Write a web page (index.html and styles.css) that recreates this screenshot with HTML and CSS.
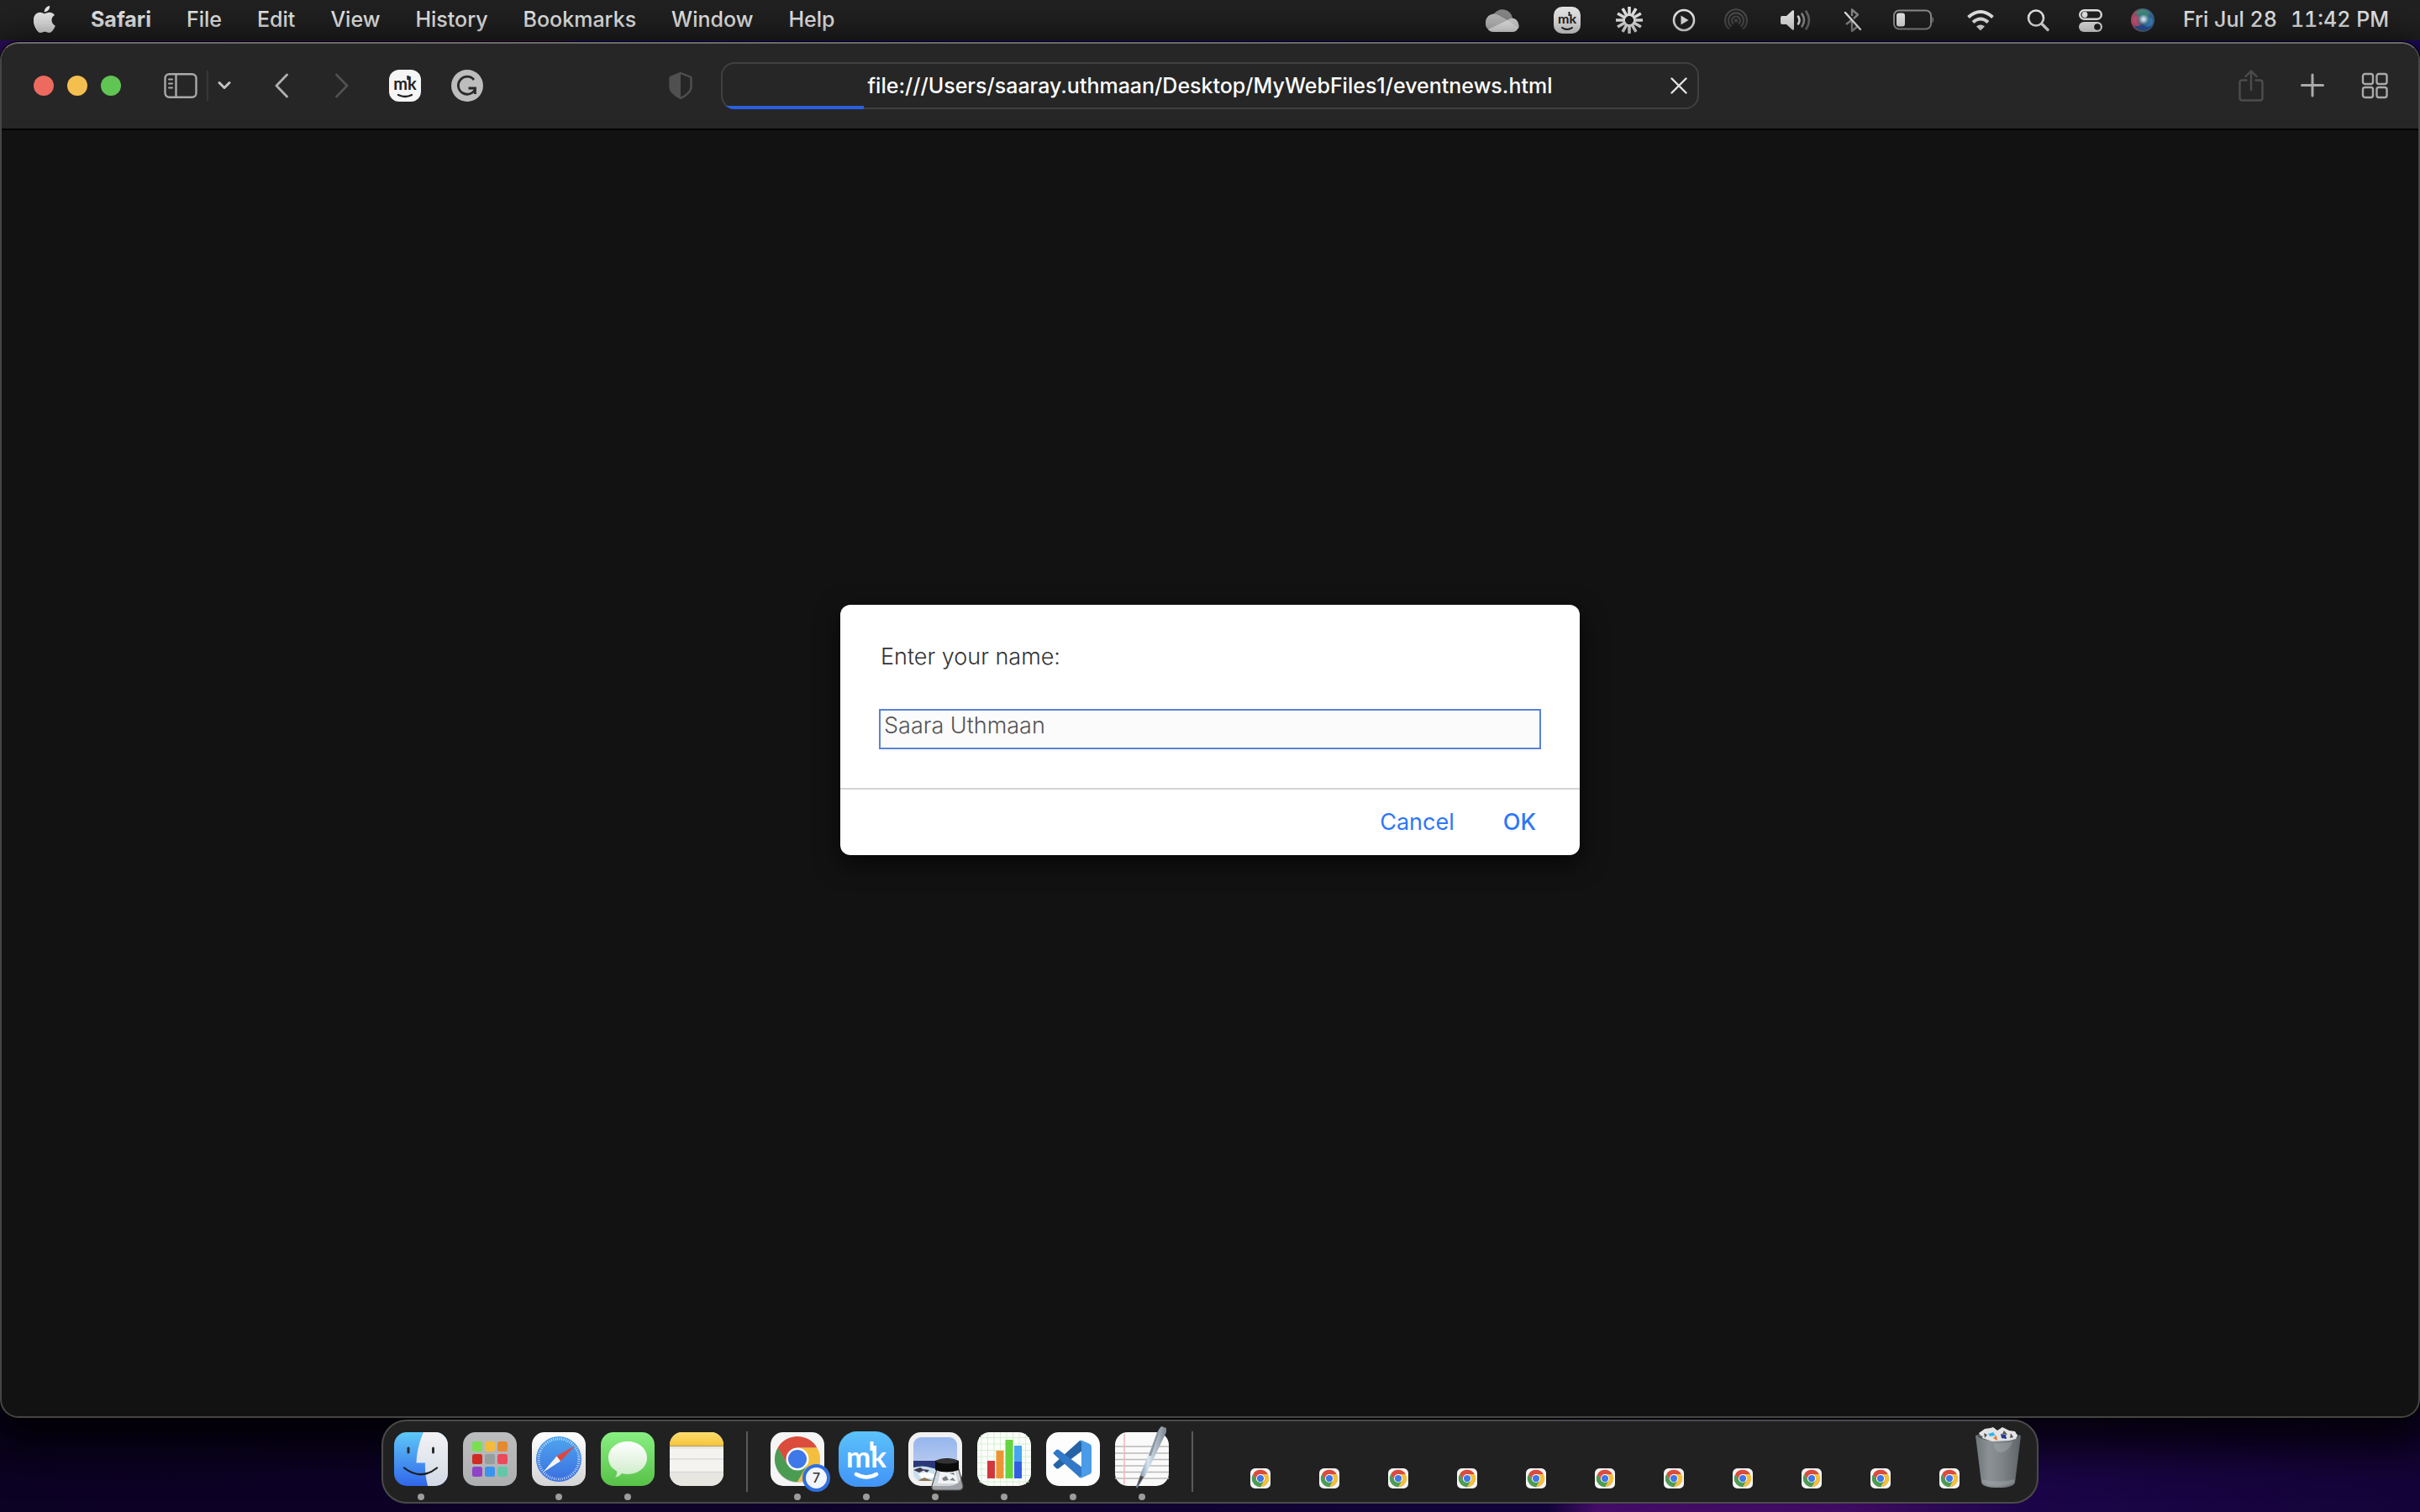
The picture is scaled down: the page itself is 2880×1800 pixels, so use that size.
FILE: index.html
```html
<!DOCTYPE html>
<html lang="en">
<head>
<meta charset="utf-8">
<title>eventnews.html</title>
<link rel="stylesheet" href="styles.css">
</head>
<body class="desktop">

<svg class="defs" aria-hidden="true">
  <defs>
    <linearGradient id="finder-blue" x1="0" y1="0" x2="0" y2="1"><stop offset="0" stop-color="#5ec8f7"/><stop offset="1" stop-color="#3166ea"/></linearGradient>
    <linearGradient id="finder-white" x1="0" y1="0" x2="0" y2="1"><stop offset="0" stop-color="#f2f2f4"/><stop offset="1" stop-color="#d2dae6"/></linearGradient>
    <linearGradient id="green" x1="0" y1="0" x2="0" y2="1"><stop offset="0" stop-color="#88f083"/><stop offset="1" stop-color="#58c147"/></linearGradient>
    <linearGradient id="bubble" x1="0" y1="0" x2="0" y2="1"><stop offset="0" stop-color="#fff"/><stop offset="1" stop-color="#cdebc8"/></linearGradient>
    <linearGradient id="white" x1="0" y1="0" x2="0" y2="1"><stop offset="0" stop-color="#fff"/><stop offset="1" stop-color="#d4d4d4"/></linearGradient>
    <linearGradient id="compass" x1="0" y1="0" x2="0" y2="1"><stop offset="0" stop-color="#4fa5ee"/><stop offset="1" stop-color="#3a6fe0"/></linearGradient>
    <linearGradient id="notes-top" x1="0" y1="0" x2="0" y2="1"><stop offset="0" stop-color="#fbdc6e"/><stop offset="1" stop-color="#f7c53a"/></linearGradient>
    <linearGradient id="keeper" x1="0" y1="0" x2="0" y2="1"><stop offset="0" stop-color="#5bc2fa"/><stop offset="1" stop-color="#4194f8"/></linearGradient>
    <linearGradient id="sky" x1="0" y1="0" x2="0" y2="1"><stop offset="0" stop-color="#8fb2ec"/><stop offset="1" stop-color="#b4c8ef"/></linearGradient>
    <linearGradient id="can" x1="0" y1="0" x2="1" y2="0"><stop offset="0" stop-color="#6f7679"/><stop offset=".3" stop-color="#8b9194"/><stop offset=".6" stop-color="#7d8386"/><stop offset="1" stop-color="#5d6467"/></linearGradient>
    <linearGradient id="pen" x1="0" y1="0" x2="1" y2="0"><stop offset="0" stop-color="#5a6f85"/><stop offset=".4" stop-color="#d5e4ef"/><stop offset="1" stop-color="#7c8792"/></linearGradient>
    <linearGradient id="tray" x1="0" y1="0" x2="0" y2="1"><stop offset="0" stop-color="#bcbdbf"/><stop offset="1" stop-color="#aeafb0"/></linearGradient>
    <radialGradient id="siri"><stop offset="0" stop-color="#fff"/><stop offset=".3" stop-color="#b9d7ee"/><stop offset=".7" stop-color="#3d7f96" stop-opacity=".5"/><stop offset="1" stop-color="#2b4664" stop-opacity="0"/></radialGradient>
    <linearGradient id="siri-base" x1="0" y1="0" x2="1" y2="0"><stop offset="0" stop-color="#cf4668"/><stop offset=".4" stop-color="#4f6a76"/><stop offset="1" stop-color="#35679f"/></linearGradient>
    <clipPath id="tile"><rect width="64" height="64" rx="15"/></clipPath>
    <clipPath id="photo"><rect x="6" y="6" width="52" height="52" rx="9"/></clipPath>
    <symbol id="chrome" viewBox="0 0 64 64">
      <rect width="64" height="64" rx="15" fill="#f5f5f5"/>
      <circle cx="32" cy="33" r="27" fill="#0003"/>
      <path fill="#db4c3c" d="M8.6 18.5A27 27 0 0 1 55.4 18.5H32L20.3 38.8Z"/>
      <path fill="#f4bf3d" d="M55.4 18.5A27 27 0 0 1 32 59L43.7 38.8 32 18.5Z"/>
      <path fill="#4b9c52" d="M32 59A27 27 0 0 1 8.6 18.5L20.3 38.8H43.7Z"/>
      <circle cx="32" cy="32" r="13.5" fill="#fff"/><circle cx="32" cy="32" r="11" fill="#3f78e8"/>
    </symbol>
  </defs>
</svg>

<header class="menubar">
  <nav class="menus" aria-label="Menu bar">
    <button class="menu" aria-label="Apple"><svg width="26" height="32" viewBox="2.4 0 19.5 24" fill="#e9e9e9"><path d="M12.152 6.896c-.948 0-2.415-1.078-3.96-1.04-2.04.027-3.91 1.183-4.961 3.014-2.117 3.675-.546 9.103 1.519 12.09 1.013 1.454 2.208 3.09 3.792 3.039 1.52-.065 2.09-.987 3.935-.987 1.831 0 2.35.987 3.96.948 1.637-.026 2.676-1.48 3.676-2.948 1.156-1.688 1.636-3.325 1.662-3.415-.039-.013-3.182-1.221-3.22-4.857-.026-3.04 2.48-4.494 2.597-4.559-1.429-2.09-3.623-2.324-4.39-2.376-2-.156-3.675 1.09-4.61 1.09zM15.53 3.83c.843-1.012 1.4-2.427 1.245-3.83-1.207.052-2.662.805-3.532 1.818-.78.896-1.454 2.338-1.273 3.714 1.338.104 2.715-.688 3.559-1.701"/></svg></button>
    <button class="menu menu-app">Safari</button>
    <button class="menu">File</button>
    <button class="menu">Edit</button>
    <button class="menu">View</button>
    <button class="menu">History</button>
    <button class="menu">Bookmarks</button>
    <button class="menu">Window</button>
    <button class="menu">Help</button>
  </nav>
  <div class="status">
    <svg width="40" height="30" viewBox="0 0 40 30"><path fill="#8b8b8b" d="M9 9a12 11 0 0 1 23 4L20 20Z"/><path fill="#bdbdbd" d="M9 7.500Q13 7 17 10L28 16 4 27A11 11 0 0 1 9 7.500Z"/><path fill="#d6d6d6" d="M26 15Q32 10 37 15 41 20 39 25L24 17Z"/><path fill="#ebebeb" d="M3 26 26 15 39 24Q37 29 32 29H9Q5 29 3 26Z"/></svg>
    <svg width="46" height="32" viewBox="0 0 46 32"><rect x="7" width="32" height="32" rx="10" fill="#e9e9e9"/><text class="mark" x="23" y="20" font-size="16" fill="#212121" text-anchor="middle">mk</text><path d="M25.500 6v5" stroke="#212121" stroke-width="2"/><path d="M17 25q6 4 12 0" fill="none" stroke="#212121" stroke-width="2" stroke-linecap="round"/></svg>
    <svg width="34" height="34" viewBox="-17 -17 34 34"><g stroke="#e9e9e9" stroke-width="3.600"><path d="M0-16V-5M0 5V16M-16 0H-5M5 0H16M-8-13.900-2.500-4.300M2.500 4.300 8 13.900M-13.900-8-4.300-2.500M4.300 2.500 13.900 8M8-13.900 2.500-4.300M-2.500 4.300-8 13.900M13.900-8 4.300-2.500M-4.300 2.500-13.900 8"/></g><circle r="6.500" fill="none" stroke="#e9e9e9" stroke-width="2.500"/></svg>
    <svg width="28" height="28" viewBox="0 0 28 28"><circle cx="14" cy="14" r="12" fill="none" stroke="#e9e9e9" stroke-width="2.600"/><path d="M10.500 8.500v11l9-5.500z" fill="#e9e9e9"/></svg>
    <svg width="28" height="28" viewBox="0 0 28 28" fill="none" stroke="#4a4a4a" stroke-width="2.200"><path d="M6 24.500A13 13 0 1 1 22 24.500M8.500 21.500A9 9 0 1 1 19.500 21.500M11 18.500A5 5 0 1 1 17 18.500"/><circle cx="14" cy="14.500" r="2.200" fill="#4a4a4a" stroke="none"/></svg>
    <svg width="46" height="28" viewBox="0 0 46 28" fill="none" stroke-width="2.600" stroke-linecap="round"><path fill="#e9e9e9" d="M7 9h5l7-6.500q2-1 2 1v21q0 2-2 1L12 19H7q-2 0-2-2v-6q0-2 2-2Z"/><path stroke="#e9e9e9" d="M26 9.500q3 4.500 0 9"/><path stroke="#8a8a8a" d="M30.500 6.500q5 7.500 0 15"/><path stroke="#6a6a6a" d="M35.500 3.500q7 10.500 0 21"/></svg>
    <svg width="22" height="30" viewBox="0 0 22 30" fill="none" stroke-width="2.400" stroke-linejoin="round"><path stroke="#8a8a8a" d="M10 10V2.500l7 6-5 4.500M3 20l7-5.500V28l6.500-5.500"/><path stroke="#e9e9e9" stroke-linecap="round" d="M2 6l18 20"/></svg>
    <svg width="52" height="28" viewBox="0 0 52 28"><rect x="4" y="2.500" width="44" height="22" rx="6" fill="none" stroke="#8e8e8e" stroke-width="2"/><rect x="7" y="5.500" width="10" height="16" rx="3" fill="#e9e9e9"/><path d="M49.500 9.500q3 4 0 8z" fill="#8e8e8e"/></svg>
    <svg width="42" height="28" viewBox="0 0 42 28" fill="none" stroke="#e9e9e9" stroke-width="4"><path d="M6.500 10.500q14.500-13 29 0M12 16.500q9-8 18 0"/><path fill="#e9e9e9" stroke="none" d="M16 21.500q5-4 10 0l-5 5z"/></svg>
    <svg width="28" height="28" viewBox="0 0 28 28" fill="none" stroke="#e9e9e9" stroke-linecap="round"><circle cx="11" cy="11.500" r="9" stroke-width="2.600"/><path stroke-width="3.400" d="m18 18.500 7 7"/></svg>
    <svg width="28" height="28" viewBox="0 0 28 28"><rect x="1.200" y="2.200" width="25.600" height="10.600" rx="5.300" fill="none" stroke="#e9e9e9" stroke-width="2.400"/><circle cx="7" cy="7.500" r="3.400" fill="#e9e9e9"/><rect y="16" width="28" height="12" rx="6" fill="#e9e9e9"/><circle cx="22" cy="22" r="3.800" fill="#212121"/></svg>
    <svg width="28" height="28" viewBox="0 0 28 28"><circle cx="14" cy="14" r="14" fill="url(#siri-base)"/><path d="M6 5q8-7 16 0l-2 8-10-1z" fill="#3e9a78" opacity=".8"/><path d="M4 22q10 8 20 0l-8-4z" fill="#2d56a5"/><circle cx="8" cy="15" r="6" fill="#e0577c" opacity=".7"/><circle cx="20" cy="16" r="6" fill="#3f9fe0" opacity=".6"/><circle cx="15" cy="13" r="9" fill="url(#siri)"/></svg>
    <time class="clock"><span>Fri Jul 28</span><span>11:42 PM</span></time>
  </div>
</header>

<main class="window">
  <div class="toolbar">
    <div class="tools-left">
      <div class="lights">
        <button class="light light-close" aria-label="Close"></button>
        <button class="light light-min" aria-label="Minimize"></button>
        <button class="light light-max" aria-label="Zoom"></button>
      </div>
      <div class="sidebar-tools">
        <button class="tool" aria-label="Sidebar"><svg width="40" height="32" viewBox="0 0 40 32" fill="none" stroke="#a9a9a9" stroke-width="2.400"><rect x="1.500" y="2.200" width="37" height="27.600" rx="5"/><path d="M14.500 2v28"/><path stroke-linecap="round" stroke-width="2" d="M6 8.500h4M6 13.500h4M6 18.500h4"/></svg></button>
        <span class="divider"></span>
        <button class="tool" aria-label="Tab groups"><svg width="16" height="12" viewBox="0 0 16 12" fill="none" stroke="#c4c4c4" stroke-width="3" stroke-linecap="round" stroke-linejoin="round"><path d="m2 2.500 6 6 6-6"/></svg></button>
      </div>
      <div class="history-tools">
        <button class="tool" aria-label="Back"><svg width="16" height="30" viewBox="0 0 16 30" fill="none" stroke="#b0b0b0" stroke-width="2.800" stroke-linecap="round" stroke-linejoin="round"><path d="M14.500 2 2 15l12.500 13"/></svg></button>
        <button class="tool" aria-label="Forward"><svg width="16" height="30" viewBox="0 0 16 30" fill="none" stroke="#505050" stroke-width="2.800" stroke-linecap="round" stroke-linejoin="round"><path d="M1.500 2 14 15 1.500 28"/></svg></button>
      </div>
      <div class="extension-tools">
        <button class="tool" aria-label="MacKeeper"><svg width="38" height="38" viewBox="0 0 38 38"><rect width="38" height="38" rx="12" fill="#f5f5f5"/><text class="mark" x="19" y="24" font-size="20" fill="#222" text-anchor="middle">mk</text><path d="M22.500 7v5" stroke="#222" stroke-width="2.400"/><path d="M11 30q8 4 16 0" fill="none" stroke="#222" stroke-width="2.400" stroke-linecap="round"/></svg></button>
        <button class="tool" aria-label="Grammarly"><svg width="38" height="38" viewBox="0 0 38 38" fill="none" stroke="#2a2a2a" stroke-width="2.800"><circle cx="19" cy="19" r="19" fill="#bdbdbd" stroke="none"/><path d="M27 12A10.500 10.500 0 1 0 28.500 23"/><path d="M20.500 22H28.500V29"/></svg></button>
      </div>
      <button class="tool shield" aria-label="Privacy report"><svg width="28" height="34" viewBox="0 0 28 34"><path d="M14 2 25.500 6.500Q26.500 7 26.500 8V19Q26 26 14 32 2 26 1.500 19V8Q1.500 7 2.500 6.500Z" fill="none" stroke="#505050" stroke-width="2.400"/><path d="M14 2 2 6.500V19q1 8 12 13z" fill="#505050"/></svg></button>
    </div>
    <form class="address">
      <input class="address-input" type="text" aria-label="Address" value="file:///Users/saaray.uthmaan/Desktop/MyWebFiles1/eventnews.html">
      <button class="tool" type="button" aria-label="Stop loading"><svg width="20" height="20" viewBox="0 0 20 20" stroke="#e4e4e4" stroke-width="2.400" stroke-linecap="round"><path d="m1.500 1.500 17 17m0-17-17 17"/></svg></button>
      <span class="progress"></span>
    </form>
    <div class="tools-right">
      <button class="tool" aria-label="Share"><svg width="30" height="38" viewBox="0 0 30 38" fill="none" stroke="#4c4c4c" stroke-width="2.400" stroke-linecap="round" stroke-linejoin="round"><path d="M9.500 12.500H4.500Q1.500 12.500 1.500 15.500V33.500Q1.500 36.500 4.500 36.500H25.500Q28.500 36.500 28.500 33.500V15.500Q28.500 12.500 25.500 12.500H20.500M15 24V2M8.500 8 15 1.500 21.500 8"/></svg></button>
      <button class="tool" aria-label="New tab"><svg width="28" height="30" viewBox="0 0 28 30" stroke="#aaa" stroke-width="3" stroke-linecap="round"><path d="M14 2v25M1.500 14.500h25"/></svg></button>
      <button class="tool" aria-label="Tab overview"><svg width="32" height="32" viewBox="0 0 32 32" fill="none" stroke="#aaa" stroke-width="2.400"><rect x="2" y="2" width="12" height="12" rx="2.500"/><rect x="18.500" y="2" width="12" height="12" rx="2.500"/><rect x="2" y="18" width="12" height="12" rx="2.500"/><rect x="18.500" y="18" width="12" height="12" rx="2.500"/></svg></button>
    </div>
  </div>

  <div class="page">
    <form class="prompt" role="dialog" aria-labelledby="prompt-label">
      <div class="prompt-body">
        <label class="prompt-label" id="prompt-label" for="name">Enter your name:</label>
        <input class="prompt-input" id="name" type="text" value="Saara Uthmaan">
      </div>
      <div class="prompt-actions">
        <button class="prompt-button" type="button">Cancel</button>
        <button class="prompt-button prompt-ok" type="button">OK</button>
      </div>
    </form>
  </div>
</main>

<nav class="dock" aria-label="Dock">
  <a class="app running" href="#" aria-label="Finder"><svg width="64" height="64" viewBox="0 0 64 64"><g clip-path="url(#tile)"><rect width="64" height="64" fill="url(#finder-blue)"/><path fill="url(#finder-white)" d="M35 0C30 11 27 24 26.500 36.500H37C36.500 46 38 56 40 64H64V0Z"/></g><path d="M12 42.500Q32 58 51 42.500" fill="none" stroke="#1d1d1f" stroke-width="2.200" stroke-linecap="round"/><path d="M17 19v5M46.500 19v5" stroke="#2b2b2d" stroke-width="3" stroke-linecap="round"/></svg></a>
  <a class="app" href="#" aria-label="Launchpad"><svg width="64" height="64" viewBox="0 0 64 64"><rect width="64" height="64" rx="15" fill="url(#tray)"/><rect x="11" y="11" width="12" height="12" rx="2.500" fill="#79e04f"/><rect x="26" y="11" width="12" height="12" rx="2.500" fill="#f3bd3a"/><rect x="41" y="11" width="12" height="12" rx="2.500" fill="#e58a2f"/><rect x="11" y="26" width="12" height="12" rx="2.500" fill="#cf2b22"/><rect x="26" y="26" width="12" height="12" rx="2.500" fill="#979ea0"/><rect x="41" y="26" width="12" height="12" rx="2.500" fill="#ea4a5c"/><rect x="11" y="41" width="12" height="12" rx="2.500" fill="#8e44c8"/><rect x="26" y="41" width="12" height="12" rx="2.500" fill="#3a94ee"/><rect x="41" y="41" width="12" height="12" rx="2.500" fill="#62c7a6"/></svg></a>
  <a class="app running" href="#" aria-label="Safari"><svg width="64" height="64" viewBox="0 0 64 64"><rect width="64" height="64" rx="15" fill="url(#white)"/><circle cx="32" cy="32" r="27" fill="url(#compass)"/><circle cx="32" cy="32" r="24" fill="none" stroke="#dfeafc" stroke-width="3" stroke-dasharray="0.800 1.713"/><path fill="#e2453a" d="m51.500 16-22 12.500 4.500 6z"/><path fill="#f4f4f4" d="M13 48 29.500 28.500 34 34.500Z"/></svg></a>
  <a class="app running" href="#" aria-label="Messages"><svg width="64" height="64" viewBox="0 0 64 64"><rect width="64" height="64" rx="15" fill="url(#green)"/><path fill="url(#bubble)" d="M32 11C45 11 55 19.500 55 30.500S45 50 32 50Q28 50 25 49 22 53 17 53.500 20 50 19 46.500 9 41 9 30.500C9 19.500 19 11 32 11Z"/></svg></a>
  <a class="app" href="#" aria-label="Notes"><svg width="64" height="64" viewBox="0 0 64 64"><g clip-path="url(#tile)"><rect width="64" height="64" fill="#f4f3f0"/><rect y="48" width="64" height="16" fill="#e8e6e0"/><rect width="64" height="16" fill="url(#notes-top)"/><path stroke="#b7a66f" stroke-width="1.500" d="M0 16.500h64"/><path stroke="#c4c4c4" stroke-dasharray="1 1.500" d="M0 19h64"/><path stroke="#d9d9dc" stroke-width="1.500" d="M0 32h64M0 47.500h64"/></g></svg></a>
  <span class="dock-divider"></span>
  <a class="app running" href="#" aria-label="Google Chrome"><svg width="64" height="64"><use href="#chrome"/></svg><span class="badge">7</span></a>
  <a class="app running" href="#" aria-label="MacKeeper"><svg width="66" height="66" viewBox="0 0 66 66"><rect width="66" height="66" rx="22" fill="url(#keeper)"/><text class="mark" x="33" y="43" font-size="35" fill="#fff" text-anchor="middle">mk</text><path d="M39.500 12v11" stroke="#fff" stroke-width="4"/><path d="M21 51q12 7 24 0" fill="none" stroke="#fff" stroke-width="4.500" stroke-linecap="round"/></svg></a>
  <a class="app running" href="#" aria-label="Preview"><svg class="spill" width="64" height="64" viewBox="0 0 64 64"><rect width="64" height="64" rx="15" fill="#f1f1f1"/><g clip-path="url(#photo)"><rect width="64" height="36" fill="url(#sky)"/><rect y="34" width="64" height="12" fill="#2b3878"/><path fill="#c9dfee" d="M6 42q12-3 20 0t34 2v16H6Z"/><path fill="#fff" d="M12 50q10-5 18 0t16 4l-30 1z"/><path fill="#40384c" d="m6 45 8-3 5 3-6 3zm10-1 9 1-3 3z"/><path fill="#8b7553" d="m10 58 9-4 10 4z"/></g><path fill="#c9cfd4" fill-opacity=".75" stroke="#555" stroke-width="1.200" d="M34 44H60L65 64Q65 69 60 69H32Q27 69 28 64Z"/><path fill="#f1f3f5" d="M38 46h18l3 15H35Z"/><path fill="#777c80" d="m40 55 5-3 3 5-6 1zm9-6 5-1 1 3zm0 8 4-3 3 4z"/><path fill="#0c0c0c" d="M32 34Q46 28 60 34V45Q46 50 32 45Z"/><ellipse cx="46" cy="34.500" rx="13" ry="3" fill="#333"/></svg></a>
  <a class="app running" href="#" aria-label="Numbers"><svg width="64" height="64" viewBox="0 0 64 64"><rect width="64" height="64" rx="15" fill="#fcfdfb"/><path stroke="#d4f1cf" d="M5 3v58M12.500 0v64M20 0v64M27.500 0v64M35 0v64M42.500 0v64M50 0v64M57.500 2v60M2 6.500h60M0 14h64M0 21.500h64M0 29h64M0 36.500h64M0 44h64M0 51.500h64M2 59h60"/><rect x="12" y="34" width="9" height="21" fill="#d2373c"/><rect x="22.500" y="22" width="9" height="33" fill="#ec9433"/><rect x="33.500" y="9" width="9" height="46" fill="#63d63f"/><rect x="44" y="16" width="9" height="20" fill="#47a5f2"/><rect x="44" y="35" width="9" height="20" fill="#3160e2"/></svg></a>
  <a class="app running" href="#" aria-label="Visual Studio Code"><svg width="64" height="64" viewBox="0 0 64 64"><rect width="64" height="64" rx="15" fill="#fdfdfd"/><path fill="#2563a6" d="M9 38q-1 1 0 2l3 3q1 1 3 0L43 22V10q-2-1-4 1Z"/><path fill="#3178c9" d="M9 26q-1-1 0-2l3-3q1-1 3 0L43 42V54q-2 1-4-1Z"/><path fill="#4a9be8" d="M43 10 52 14Q54 15 54 17.500V46.500Q54 49 52 50L43 54Q40 55 38.500 53 42 54 42 51V13Q42 10 38.500 11 40 9 43 10Z"/></svg></a>
  <a class="app running" href="#" aria-label="TextEdit"><svg class="spill" width="64" height="64" viewBox="0 0 64 64"><rect width="64" height="64" rx="15" fill="#fafafa"/><path stroke="#b9b9b9" stroke-width="1.500" d="M0 17h64M0 25h64M0 32.500h64M0 40h64M0 47.500h64M0 55h64"/><path stroke="#f3b6b9" stroke-width="1.500" d="M11 2v60"/><path fill="url(#pen)" d="m52-3 3-4 6 2v5L36 52 26 67 25 65 31 48Z"/><path fill="#8b97a2" d="m50 0 3-2-10 30h-3z"/><path fill="#54413c" d="m30 52 4 1-7 11z"/></svg></a>
  <span class="dock-divider"></span>
  <a class="thumb" href="#" aria-label="Chrome window 1"><svg width="24" height="24"><use href="#chrome"/></svg></a>
  <a class="thumb" href="#" aria-label="Chrome window 2"><svg width="24" height="24"><use href="#chrome"/></svg></a>
  <a class="thumb" href="#" aria-label="Chrome window 3"><svg width="24" height="24"><use href="#chrome"/></svg></a>
  <a class="thumb" href="#" aria-label="Chrome window 4"><svg width="24" height="24"><use href="#chrome"/></svg></a>
  <a class="thumb" href="#" aria-label="Chrome window 5"><svg width="24" height="24"><use href="#chrome"/></svg></a>
  <a class="thumb" href="#" aria-label="Chrome window 6"><svg width="24" height="24"><use href="#chrome"/></svg></a>
  <a class="thumb" href="#" aria-label="Chrome window 7"><svg width="24" height="24"><use href="#chrome"/></svg></a>
  <a class="thumb" href="#" aria-label="Chrome window 8"><svg width="24" height="24"><use href="#chrome"/></svg></a>
  <a class="thumb" href="#" aria-label="Chrome window 9"><svg width="24" height="24"><use href="#chrome"/></svg></a>
  <a class="thumb" href="#" aria-label="Chrome window 10"><svg width="24" height="24"><use href="#chrome"/></svg></a>
  <a class="thumb" href="#" aria-label="Chrome window 11"><svg width="24" height="24"><use href="#chrome"/></svg></a>
  <a class="app trash" href="#" aria-label="Trash"><svg class="spill" width="64" height="64" viewBox="0 0 64 64"><path fill="url(#can)" d="M3 4Q30-4 57 4L50 60Q48 66 30 66T10 60Z"/><path fill="#4d5356" d="M5 4q25-7 50 0-3 6-25 6T5 4Z"/><path fill="#e4e4e4" d="m7 1 7-5 7-1 3-1 5 4 6-4 8 4 7 1 3 5-2 4-8 2-20 1-12-4z"/><path fill="#555" d="m13 1 4 2-3 4zm24-3 4 5-6-1zm8 3 3 5-4 1zM9 4l3 1-2 2z"/><path fill="#38b5e6" d="m18 2 6-2 3 4-7 1z"/><path fill="#e07a2c" d="m24 7 4-3 1 6z"/><path fill="#273a8f" d="m33 2 6 1 1 5-6-1z"/><path fill="#b0b6b8" opacity=".35" d="M25 13q15 0 22-2-4 13-15 13-8-2-7-11Z"/><path fill="#a7adb0" opacity=".4" d="M10 56q20 5 40 0l-2 5q-18 6-36 0z"/></svg></a>
</nav>

</body>
</html>
```
FILE: styles.css
```css
* {
  box-sizing: border-box;
}

.desktop {
  margin: 0;
  min-height: 100vh;
  display: flex;
  flex-direction: column;
  font-family: Inter, "Liberation Sans", sans-serif;
  font-size: 25px;
  font-weight: 500;
  color: #e9e9e9;
  background:
    linear-gradient(90deg, #32106a 0, #4a1450 23%, #1d109c 24%, #260b86 60%, #1f0a66 100%) top / 100% 80px no-repeat,
    linear-gradient(90deg, #0c0224 0, #0e0228 30%, #12043a 64%, #430c66 66%, #3f0b62 76%, #1b0548 84%, #140338 100%);
}

button,
input {
  font: inherit;
  color: inherit;
  margin: 0;
  padding: 0;
  border: 0;
  background: none;
}

svg {
  display: block;
  flex: none;
}

.defs {
  position: absolute;
  width: 0;
  height: 0;
}

.mark {
  font-family: Lato, sans-serif;
  font-weight: 700;
}

/* Menu bar */

.menubar {
  display: flex;
  justify-content: space-between;
  align-items: center;
  height: 48px;
  padding: 0 37px 0 40px;
  background: #212121;
}

.menus {
  display: flex;
  align-items: center;
  gap: 42px;
}

.menu {
  line-height: 32px;
  padding-bottom: 2px;
}

.menu-app {
  font-weight: 700;
}

.status {
  display: flex;
  align-items: center;
  gap: 34px;
}

.clock {
  display: flex;
  gap: 16px;
  line-height: 32px;
  padding-bottom: 2px;
  font-variant-numeric: tabular-nums;
}

/* Browser window */

.window {
  flex: 1;
  display: flex;
  flex-direction: column;
  margin-top: 2px;
  border: 2px solid #454545;
  border-top-color: #6b6b6b;
  border-radius: 22px;
  overflow: hidden;
  box-shadow: 0 0 0 1px #000, 0 20px 50px 20px #000c;
  background: #121212;
}

.toolbar {
  display: grid;
  grid-template-columns: 1fr minmax(0, 1164px) 1fr;
  align-items: center;
  height: 103px;
  padding-bottom: 2px;
  border-bottom: 2px solid #000;
  background: #262626;
}

.tools-left {
  display: flex;
  align-items: center;
  padding: 0 34px 0 38px;
}

.lights {
  display: flex;
  gap: 16px;
}

.light {
  width: 24px;
  height: 24px;
  border-radius: 50%;
}

.light-close {
  background: #ed6a5e;
}

.light-min {
  background: #f5bf4f;
}

.light-max {
  background: #61c554;
}

.sidebar-tools {
  display: flex;
  align-items: center;
  gap: 11px;
  margin-left: 51px;
}

.divider {
  width: 2px;
  height: 36px;
  background: #383838;
}

.history-tools {
  display: flex;
  gap: 56px;
  margin-left: 52px;
}

.extension-tools {
  display: flex;
  gap: 36px;
  margin-left: 48px;
}

.shield {
  margin-left: auto;
}

.address {
  position: relative;
  display: flex;
  align-items: center;
  height: 56px;
  padding: 0 14px 0 34px;
  border-radius: 16px;
  box-shadow: inset 0 0 0 2px #404040;
  overflow: hidden;
}

.address-input {
  flex: 1;
  min-width: 0;
  height: 52px;
  text-align: center;
  color: #fff;
}

.progress {
  position: absolute;
  left: 0;
  bottom: 0;
  width: 170px;
  height: 4px;
  background: #2860e0;
}

.tools-right {
  display: flex;
  justify-content: flex-end;
  align-items: center;
  gap: 44px;
  padding-right: 36px;
}

/* Page and prompt */

.page {
  flex: 1;
  display: flex;
  justify-content: center;
  align-items: center;
  padding-bottom: 104px;
}

.prompt {
  width: 880px;
  border-radius: 12px;
  background: #fff;
  box-shadow: 0 10px 30px #000a;
  font-size: 27px;
  font-weight: 300;
  overflow: hidden;
}

.prompt-body {
  display: flex;
  flex-direction: column;
  gap: 46px;
  padding: 46px;
}

.prompt-label {
  padding-left: 2px;
  line-height: 32px;
  color: #333;
}

.prompt-input {
  height: 48px;
  padding: 0 4px 8px;
  border: 2px solid #5b82d6;
  background: #fbfbfb;
  color: #555;
}

.prompt-actions {
  display: flex;
  justify-content: flex-end;
  align-items: center;
  gap: 58px;
  height: 80px;
  padding: 0 52px;
  border-top: 2px solid #d4d4d4;
}

.prompt-button {
  line-height: 32px;
  font-weight: 400;
  color: #2f77f6;
}

.prompt-ok {
  font-weight: 500;
}

/* Dock */

.dock {
  align-self: center;
  display: flex;
  align-items: center;
  height: 100px;
  margin: 2px 0 10px;
  padding: 0 4px;
  border: 2px solid #4a4a4a;
  border-radius: 30px;
  background: #212121;
  z-index: 1;
}

.app,
.thumb {
  position: relative;
  display: flex;
  justify-content: center;
  align-items: center;
  width: 82px;
  height: 96px;
  padding-bottom: 6px;
  text-decoration: none;
}

.thumb {
  align-items: flex-end;
  justify-content: flex-end;
  padding: 0 8px 16px;
}

.trash {
  width: 80px;
}

.running::after {
  content: "";
  position: absolute;
  bottom: 2px;
  width: 8px;
  height: 8px;
  border-radius: 50%;
  background: #9c9c9c;
}

.spill {
  overflow: visible;
}

.badge {
  position: absolute;
  right: 2px;
  bottom: 12px;
  width: 33px;
  height: 33px;
  border: 4px solid #3070e0;
  border-radius: 50%;
  background: #f2f5fc;
  color: #333;
  font-size: 16px;
  line-height: 25px;
  text-align: center;
}

.dock-divider {
  width: 2px;
  height: 72px;
  margin: 0 18px;
  background: #5a5a5a;
}
```
